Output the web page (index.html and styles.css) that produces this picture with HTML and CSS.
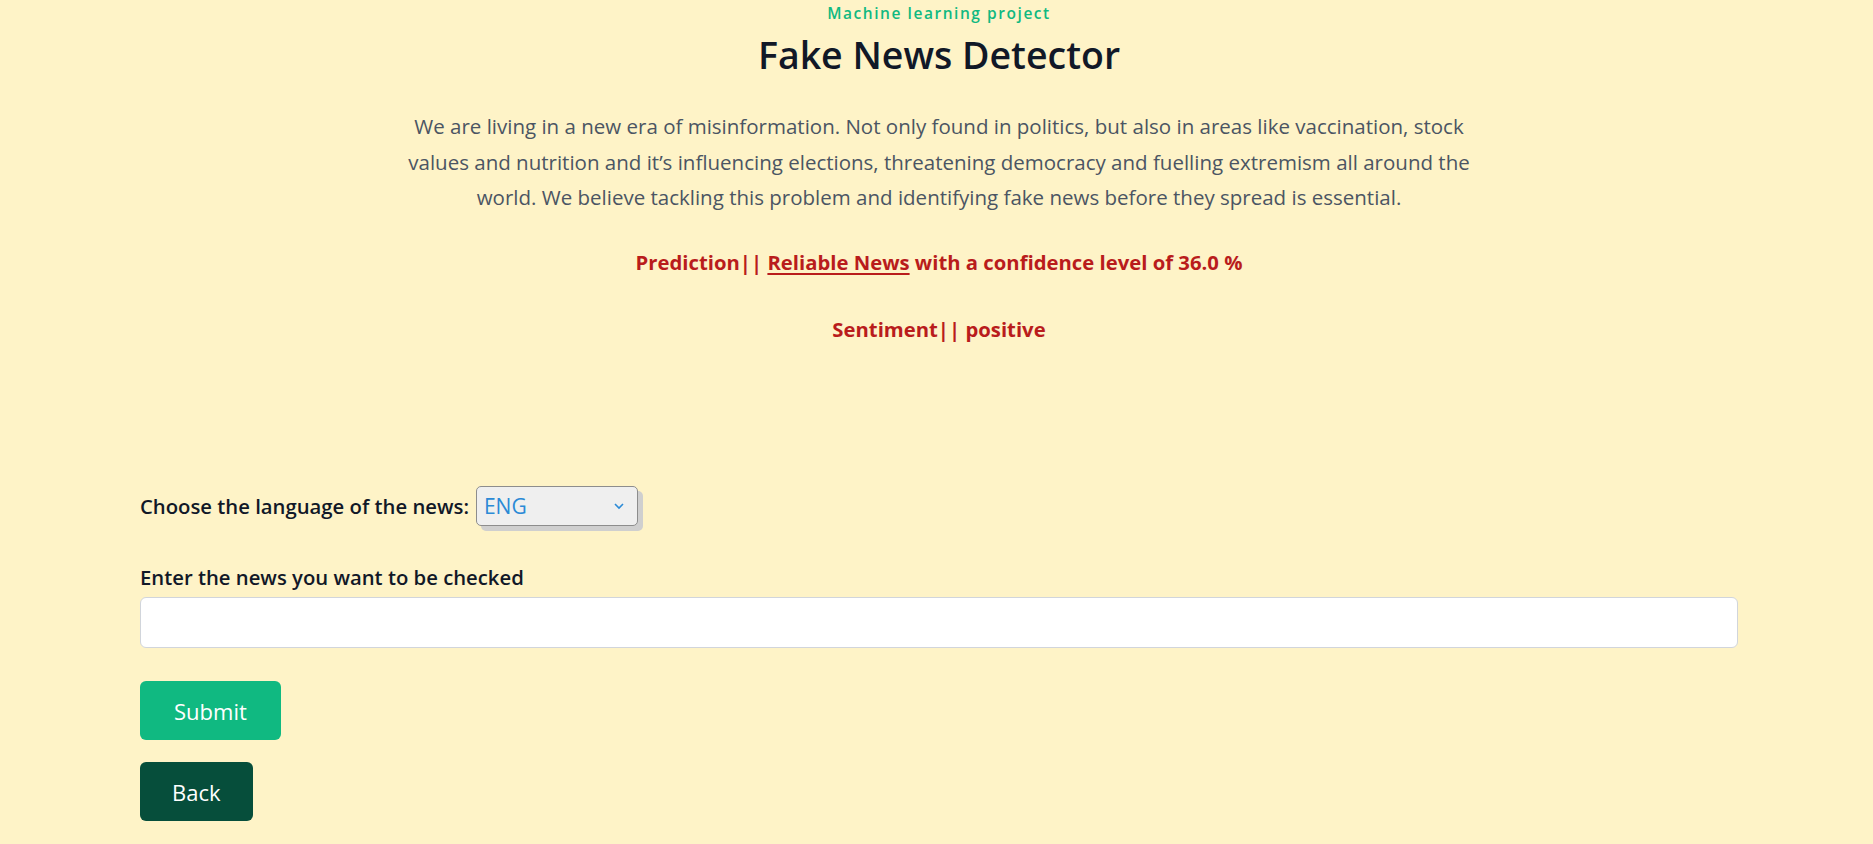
FILE: index.html
```html
<!DOCTYPE html>
<html lang="en">
<head>
<meta charset="utf-8">
<title>Fake News Detector</title>
<link rel="stylesheet" href="styles.css">
</head>
<body>
<main class="page">
  <header class="hero">
    <p class="eyebrow">Machine learning project</p>
    <h1 class="title">Fake News Detector</h1>
    <p class="lead">We are living in a new era of misinformation. Not only found in politics, but also in areas like vaccination, stock values and nutrition and it’s influencing elections, threatening democracy and fuelling extremism all around the world. We believe tackling this problem and identifying fake news before they spread is essential.</p>
    <p class="result">Prediction|| <span class="underline">Reliable News</span> with a confidence level of 36.0 %</p>
    <p class="result">Sentiment|| positive</p>
  </header>

  <form class="form">
    <div class="lang-row">
      <label class="label" for="lang">Choose the language of the news:</label>
      <div class="select">
        <span class="select-value">ENG</span>
        <svg class="chev" width="12" height="8" viewBox="0 0 12 8"><path d="M2 2l4 4 4-4" fill="none" stroke="#2b8ad6" stroke-width="1.6"/></svg>
      </div>
    </div>
    <div class="field">
      <label class="label" for="news">Enter the news you want to be checked</label>
      <input id="news" class="input" type="text">
    </div>
    <div class="actions">
      <button type="button" class="btn btn-submit">Submit</button>
      <button type="button" class="btn btn-back">Back</button>
    </div>
  </form>
</main>
</body>
</html>
```

FILE: styles.css
```css
html, body {
  margin: 0;
  padding: 0;
  background: #fef3c7;
}
body {
  font-family: "Segoe UI", "Open Sans", "Noto Sans", sans-serif;
  color: #111827;
}
.page {
  padding: 0 135px 0 140px;
}
.hero {
  text-align: center;
}
.eyebrow {
  margin: 0;
  padding-top: 3px;
  font-size: 15.5px;
  line-height: 20px;
  letter-spacing: 0.1em;
  font-weight: 600;
  color: #10b981;
}
.title {
  margin: 7px 0 0;
  font-size: 37.5px;
  line-height: 50px;
  font-weight: 600;
  color: #111827;
}
.lead {
  margin: 29px auto 0;
  max-width: 1075px;
  font-size: 20.5px;
  line-height: 35.7px;
  color: #4b5563;
}
.result {
  margin: 0;
  font-size: 20.3px;
  line-height: 30px;
  font-weight: 700;
  color: #b91c1c;
}
.lead + .result {
  margin-top: 31px;
}
.result + .result {
  margin-top: 37px;
}
.underline {
  text-decoration: underline;
  text-underline-offset: 3px;
}
.form {
  margin-top: 141px;
}
.lang-row {
  display: flex;
  align-items: center;
  gap: 7px;
  height: 42px;
}
.label {
  font-size: 20.3px;
  font-weight: 600;
  color: #111827;
}
.select {
  box-sizing: border-box;
  width: 162px;
  height: 40px;
  display: flex;
  align-items: center;
  justify-content: space-between;
  padding: 0 12px 0 7px;
  background: #efefef;
  border: 1px solid #8d8d8d;
  border-radius: 5px;
  box-shadow: 5px 5px 0 #cfcfcf;
}
.select-value {
  font-size: 21px;
  color: #2b8ad6;
}
.field {
  margin-top: 36px;
  display: flex;
  flex-direction: column;
}
.field .label {
  line-height: 28px;
}
.input {
  box-sizing: border-box;
  margin-top: 6px;
  height: 51px;
  width: 100%;
  background: #fff;
  border: 1px solid #d1d5db;
  border-radius: 6px;
}
.actions {
  margin-top: 33px;
  display: flex;
  flex-direction: column;
  align-items: flex-start;
  gap: 22px;
}
.btn {
  font-family: inherit;
  border: 0;
  border-radius: 6px;
  height: 59px;
  padding: 0 34px;
  font-size: 22px;
  color: #fff;
}
.btn-submit {
  background: #10b981;
}
.btn-back {
  padding: 0 32px;
  background: #064e3b;
}
```
